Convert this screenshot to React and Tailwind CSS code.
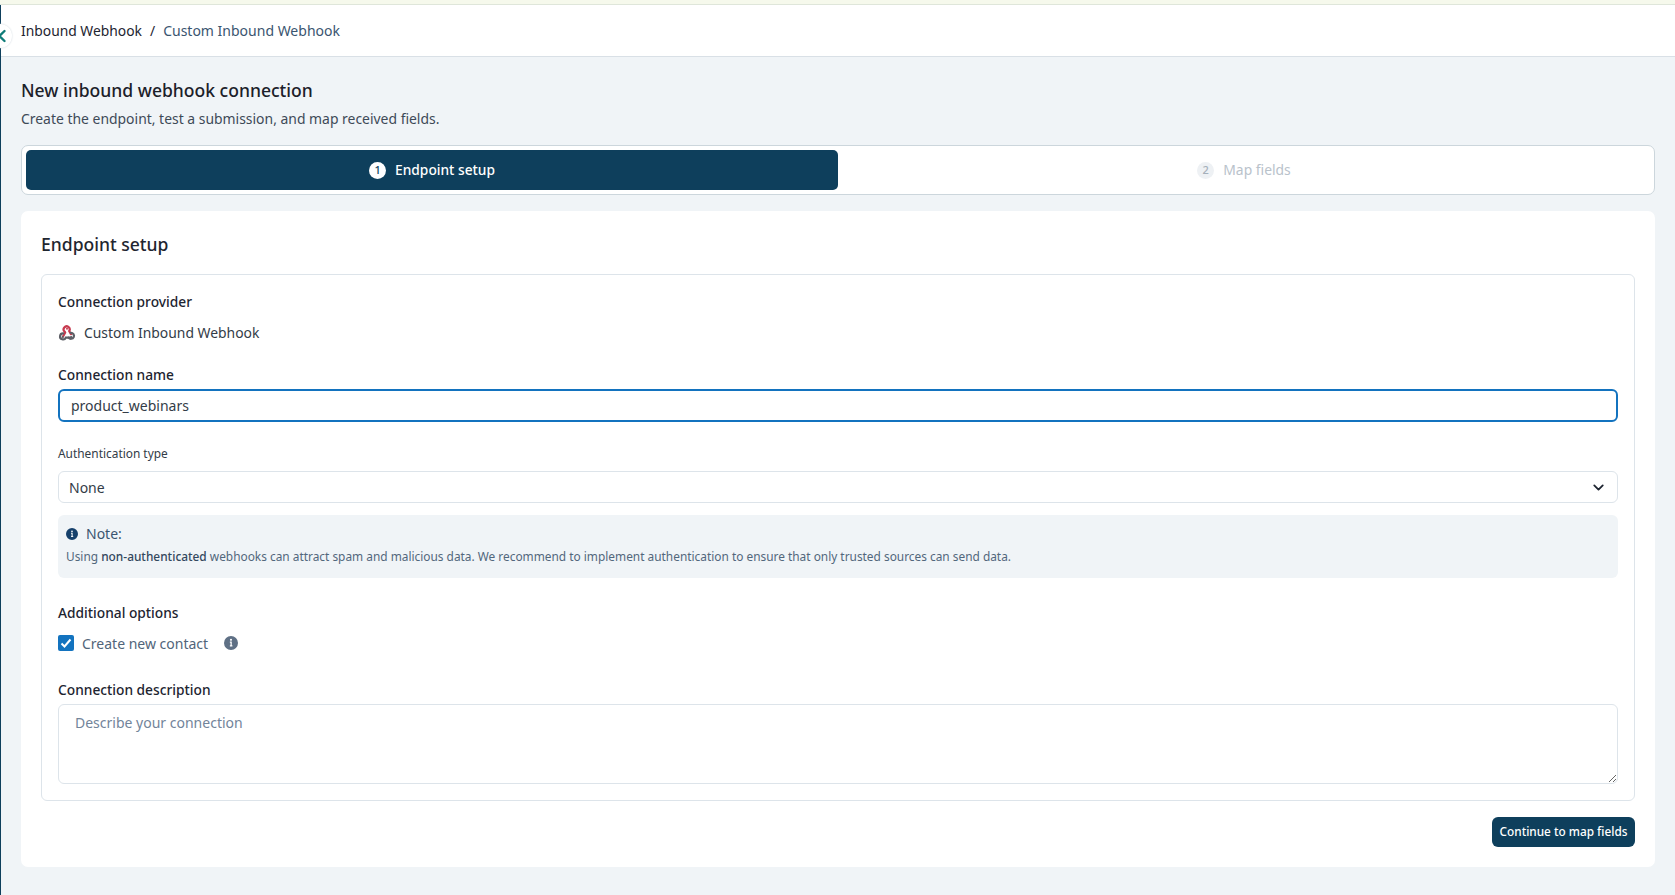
import { ChevronDown, ChevronLeft } from 'lucide-react';

function InfoIcon({ className }) {
  return (
    <svg viewBox="0 0 16 16" className={className} fill="currentColor">
      <path fillRule="evenodd" d="M8 0a8 8 0 1 1 0 16A8 8 0 0 1 8 0Zm-1.3 6.4v1.3h.7v2.9h-.7v1.3h2.9v-1.3h-.7V6.4H6.7ZM8 3.2a1.2 1.2 0 1 0 0 2.4 1.2 1.2 0 0 0 0-2.4Z" />
    </svg>
  );
}

function WebhookLogo() {
  return (
    <svg viewBox="0 0 18 18" className="h-[18px] w-[18px]" fill="none" strokeWidth="2.2" strokeLinecap="round">
      <path d="M7.2 8.4 5 12.6" stroke="#c73a4f" />
      <path d="M6.6 7.6a3 3 0 1 1 4.6-.6L13 10.2" stroke="#c73a4f" />
      <path d="M5.2 9.4a3 3 0 1 0 2.6 4.2h5.4" stroke="#5d5f66" />
      <path d="M10.6 13.6a3 3 0 1 0 2.2-4.8" stroke="#5d5f66" />
      <circle cx="9" cy="4.8" r="1" fill="#c73a4f" stroke="none" />
      <circle cx="4.8" cy="13" r="1" fill="#5d5f66" stroke="none" />
      <circle cx="13.2" cy="13" r="1" fill="#5d5f66" stroke="none" />
    </svg>
  );
}

export default function App() {
  return (
    <div className="relative flex h-[895px] w-[1675px] flex-col overflow-hidden bg-[#f0f4f7] font-['Noto_Sans',sans-serif] text-[#1d2430]">
      <div className="h-[5px] shrink-0 border-b border-[#dfe6da] bg-[#f6f9ec]" />

      <div className="flex flex-1 flex-col border-l border-[#0e3f5c]">
        <header className="flex h-[52px] shrink-0 items-center gap-[8px] border-b border-[#d9e0e6] bg-white pl-[20px] text-[13.85px] leading-5">
          <span>Inbound Webhook</span>
          <span>/</span>
          <span className="text-[14px] text-[#3a5570]">Custom Inbound Webhook</span>
        </header>

        <main className="flex flex-1 flex-col pl-[20px] pr-[20px]">
          <h1 className="mt-[21px] text-[17.55px] font-medium leading-6 text-[#1b2029]">New inbound webhook connection</h1>
          <p className="mt-[7px] text-[13.93px] leading-5 text-[#3e4a57]">Create the endpoint, test a submission, and map received fields.</p>

          <div className="mt-[16px] flex h-[50px] rounded-[7px] border border-[#ccd6dc] bg-white p-1">
            <div className="flex w-[812px] items-center justify-center gap-[9px] rounded-[5px] bg-[#0e3f5c] text-[13.75px] font-medium text-white">
              <span className="flex h-[17px] w-[17px] items-center justify-center rounded-full bg-white text-[11px] font-medium text-[#0e3f5c]">1</span>
              Endpoint setup
            </div>
            <div className="flex flex-1 items-center justify-center gap-[9px] text-[13.9px] text-[#b9c2cb]">
              <span className="flex h-[17px] w-[17px] items-center justify-center rounded-full bg-[#eef1f4] text-[11px] font-medium text-[#a5b0ba]">2</span>
              Map fields
            </div>
          </div>

          <section className="mt-[16px] flex h-[656px] flex-col rounded-[7px] bg-white px-[20px]">
            <h2 className="mt-[21px] text-[17.55px] font-medium leading-6 text-[#1f2630]">Endpoint setup</h2>

            <div className="mt-[18px] flex h-[527px] flex-col rounded-[6px] border border-[#dde4ea] px-4">
              <label className="mt-[17px] text-[13.75px] font-medium leading-5">Connection provider</label>
              <div className="mt-[11px] flex items-center gap-2 text-[13.9px] leading-5 text-[#333c47]">
                <WebhookLogo />
                Custom Inbound Webhook
              </div>

              <label className="mt-[22px] text-[13.75px] font-medium leading-5">Connection name</label>
              <input
                readOnly
                value="product_webinars"
                className="mt-[4px] h-[33px] w-full rounded-[6px] border-2 border-[#1373bf] px-[11px] text-[14px] text-[#333c47] outline-none"
              />

              <label className="mt-[23px] text-[11.9px] leading-4 text-[#333c47]">Authentication type</label>
              <div className="mt-[10px] flex h-[32px] items-center justify-between rounded-[6px] border border-[#dde4ea] pl-[10px] pr-[10px] text-[14px] text-[#333c47]">
                None
                <ChevronDown className="h-[17px] w-[17px] text-[#1d2430]" strokeWidth={2.5} />
              </div>

              <div className="mt-[12px] h-[63px] rounded-[6px] bg-[#f0f4f7] px-2 pt-[9px]">
                <div className="flex items-center gap-[8px] text-[14px] leading-5 text-[#3a5570]">
                  <InfoIcon className="h-[12px] w-[12px] text-[#16406b]" />
                  Note:
                </div>
                <p className="mt-[4px] text-[11.88px] leading-4 text-[#52677c]">
                  Using <span className="font-medium text-[#33485e]">non-authenticated</span> webhooks can attract spam and malicious data. We recommend to implement authentication to ensure that only trusted sources can send data.
                </p>
              </div>

              <label className="mt-[25px] text-[13.75px] font-medium leading-5">Additional options</label>
              <div className="mt-[12px] flex h-4 items-center text-[14px] text-[#51657a]">
                <span className="flex h-4 w-4 items-center justify-center rounded-[2px] bg-[#1373bf]">
                  <svg viewBox="0 0 16 16" className="h-4 w-4" fill="none" stroke="white" strokeWidth="2">
                    <path d="m3.5 8.5 3 3 6-7" />
                  </svg>
                </span>
                <span className="ml-2">Create new contact</span>
                <InfoIcon className="ml-4 h-[14px] w-[14px] text-[#5f7085]" />
              </div>

              <label className="mt-[29px] text-[13.75px] font-medium leading-5">Connection description</label>
              <textarea
                readOnly
                placeholder="Describe your connection"
                className="mt-[4px] h-[80px] w-full rounded-[6px] border border-[#dde4ea] px-[16px] pb-[7px] pt-[8px] text-[14px] leading-5 outline-none placeholder:text-[#72849a]"
              />
            </div>

            <div className="mt-[16px] flex justify-end">
              <button type="button" className="h-[30px] w-[143px] rounded-[6px] bg-[#0e3f5c] text-[11.8px] font-medium text-white">
                Continue to map fields
              </button>
            </div>
          </section>
        </main>
      </div>

      <div className="absolute left-[-12px] top-[24px] flex h-6 w-6 items-center justify-center rounded-full bg-white shadow-[0_0_2px_#cfd8de]">
        <ChevronLeft className="ml-[3px] h-5 w-5 shrink-0 text-[#0f7c78]" strokeWidth={2.8} />
      </div>
    </div>
  );
}
